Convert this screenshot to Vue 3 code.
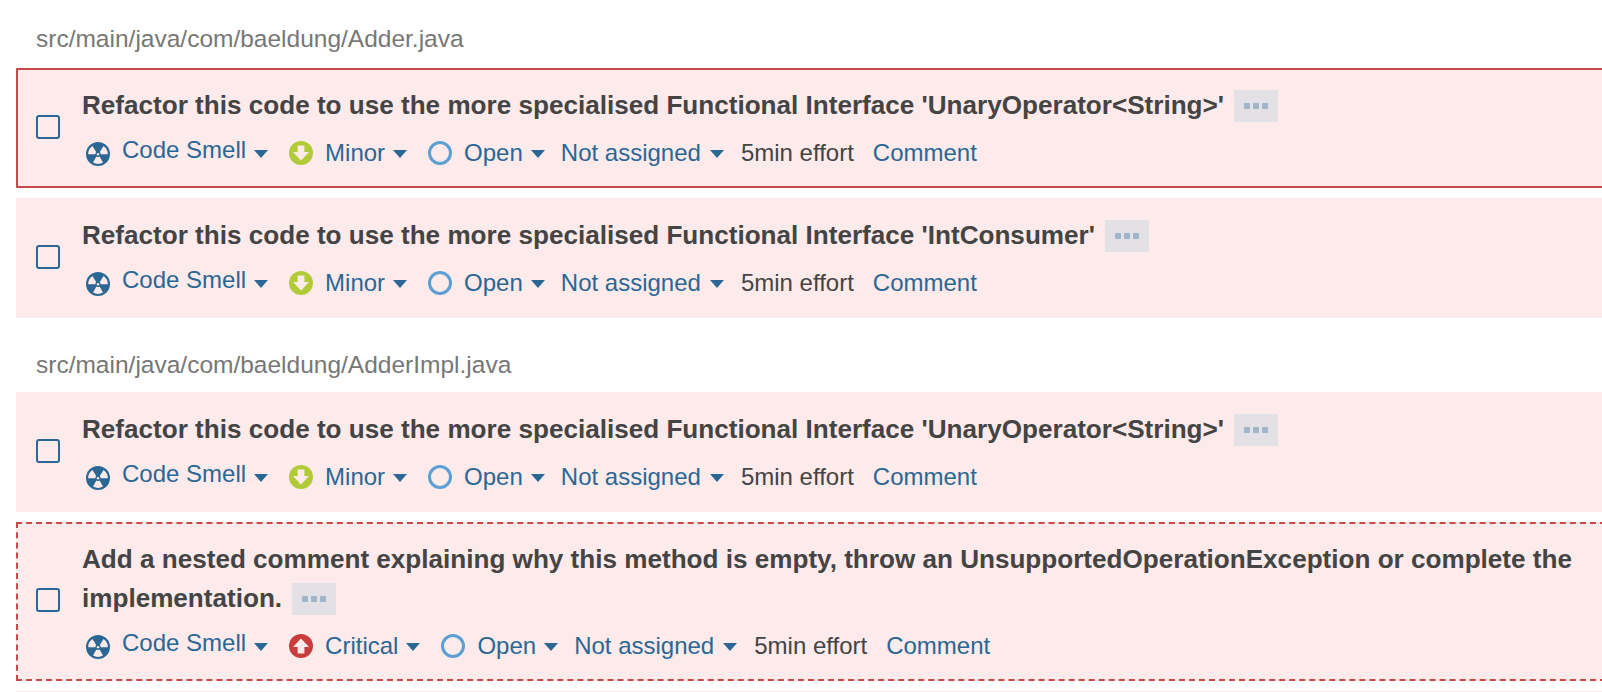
<template>
  <div class="page">
    <section v-for="group in groups" :key="group.path" class="group">
      <div class="path">{{ group.path }}</div>
      <div
        v-for="issue in group.issues"
        :key="issue.id"
        class="issue"
        :class="issue.state"
      >
        <span class="check"></span>
        <div class="body">
          <div class="title">
            {{ issue.title }}
            <span class="more"><i></i><i></i><i></i></span>
          </div>
          <div class="meta">
            <span class="item type">
              <svg class="ico" viewBox="0 0 24 24">
                <circle cx="12" cy="12" r="12" fill="#2b6794" />
                <path d="M2.2 12.2 A9.8 9.8 0 0 1 6.4 4 L10.2 10 A2.6 2.6 0 0 0 9.4 12.2 Z" fill="#fdeaea" />
                <path d="M21.8 12.2 A9.8 9.8 0 0 0 17.6 4 L13.8 10 A2.6 2.6 0 0 1 14.6 12.2 Z" fill="#fdeaea" />
                <path d="M7 20.4 A9.8 9.8 0 0 0 17 20.4 L13.6 14.6 A3 3 0 0 1 10.4 14.6 Z" fill="#fdeaea" />
                <circle cx="12" cy="12.2" r="1.2" fill="#fdeaea" />
              </svg>
              <a class="label">Code Smell</a><span class="caret"></span>
            </span>
            <span class="item sev">
              <svg class="ico" viewBox="0 0 24 24">
                <template v-if="issue.severity === 'Minor'">
                  <circle cx="12" cy="12" r="12" fill="#b0cb37" />
                  <path d="M8.6 4.5 H15.4 V11 H20 L12 19.5 L4 11 H8.6 Z" fill="#fdeaea" />
                </template>
                <template v-else>
                  <circle cx="12" cy="12" r="12" fill="#c93c3c" />
                  <path d="M8.6 19.5 H15.4 V13 H20 L12 4.5 L4 13 H8.6 Z" fill="#fdeaea" />
                </template>
              </svg>
              <a class="label">{{ issue.severity }}</a><span class="caret"></span>
            </span>
            <span class="item status">
              <svg class="ico" viewBox="0 0 24 24">
                <circle cx="12" cy="12" r="10.5" fill="none" stroke="#5b9fd4" stroke-width="3" />
              </svg>
              <a class="label">Open</a><span class="caret"></span>
            </span>
            <span class="item assignee">
              <a class="label">Not assigned</a><span class="caret"></span>
            </span>
            <span class="item effort">5min effort</span>
            <a class="item label">Comment</a>
          </div>
        </div>
      </div>
    </section>
    <div class="next"></div>
  </div>
</template>

<script setup>
const specialised = (name) =>
  `Refactor this code to use the more specialised Functional Interface '${name}'`

const groups = [
  {
    path: 'src/main/java/com/baeldung/Adder.java',
    issues: [
      { id: 1, state: 'selected', severity: 'Minor', title: specialised('UnaryOperator<String>') },
      { id: 2, state: '', severity: 'Minor', title: specialised('IntConsumer') }
    ]
  },
  {
    path: 'src/main/java/com/baeldung/AdderImpl.java',
    issues: [
      { id: 3, state: '', severity: 'Minor', title: specialised('UnaryOperator<String>') },
      {
        id: 4,
        state: 'dashed',
        severity: 'Critical',
        title:
          'Add a nested comment explaining why this method is empty, throw an UnsupportedOperationException or complete the implementation.'
      }
    ]
  }
]
</script>

<style>
html,
body {
  margin: 0;
  background: #fff;
  overflow: hidden;
}
</style>

<style scoped>
.page {
  height: 692px;
  overflow: hidden;
  padding-left: 16px;
  font-family: "Liberation Sans", Arial, sans-serif;
  font-size: 24px;
  color: #444;
}
.group {
  display: flex;
  flex-direction: column;
}
.path {
  height: 68px;
  box-sizing: border-box;
  padding: 24px 0 0 20px;
  font-size: 24.5px;
  line-height: 30px;
  color: #777;
}
.group + .group .path {
  height: 64px;
  padding-top: 22px;
}
.issue {
  display: flex;
  align-items: center;
  box-sizing: border-box;
  margin: 0 -4px 10px 0;
  padding: 16px 0;
  border: 2px solid transparent;
  background: #fdeaea;
}
.selected {
  border-color: #c94a47;
}
.dashed {
  border: 2px dashed #c94a47;
}
.check {
  flex: none;
  box-sizing: border-box;
  width: 24px;
  height: 24px;
  margin: 0 22px 3px 18px;
  border: 2px solid #2b6794;
  border-radius: 3px;
}
.body {
  flex: 1;
  min-width: 0;
  padding-right: 28px;
}
.title {
  font-size: 26.1px;
  font-weight: 700;
  line-height: 39px;
  color: #444;
}
.more {
  display: inline-flex;
  align-items: center;
  justify-content: center;
  gap: 3px;
  box-sizing: border-box;
  width: 44px;
  height: 32px;
  margin-left: 3px;
  vertical-align: 5px;
  background: #e3e0e6;
}
.more i {
  width: 6px;
  height: 6px;
  border-radius: 1px;
  background: #a0b4ca;
}
.meta {
  display: flex;
  align-items: center;
  height: 37px;
  margin-top: 9px;
  margin-bottom: -1px;
  padding-left: 4px;
  white-space: nowrap;
}
.item {
  display: inline-flex;
  align-items: center;
  margin-right: 16px;
}
.ico {
  flex: none;
  width: 24px;
  height: 24px;
  margin-right: 12px;
}
.type {
  margin-right: 17px;
}
.type .ico {
  margin-top: 3px;
}
.type .label {
  margin-bottom: 6px;
}
.sev {
  margin-right: 17px;
}
.status {
  margin-right: 12px;
}
.assignee {
  margin-right: 13px;
}
.assignee .caret {
  margin-left: 9px;
}
.effort {
  margin-right: 19px;
  color: #444;
}
.label {
  color: #2b6794;
}
.caret {
  width: 0;
  height: 0;
  margin: 3px 4px 0 8px;
  border-left: 7px solid transparent;
  border-right: 7px solid transparent;
  border-top: 8px solid #2b6794;
}
.next {
  height: 20px;
  margin-right: -4px;
  background: #fdeaea;
}
</style>
